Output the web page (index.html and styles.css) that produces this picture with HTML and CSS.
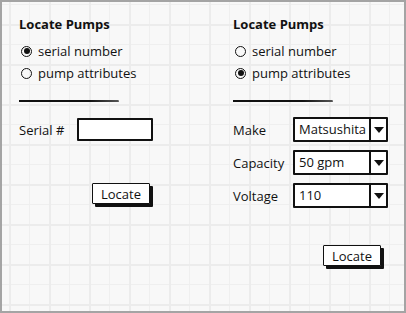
FILE: index.html
```html
<!DOCTYPE html>
<html lang="en">
<head>
    <meta charset="UTF-8">
    <title>Locate Pumps</title>
    <link rel="stylesheet" href="styles.css">
</head>
<body>
    <div class="frame">
        <div class="panel">
            <h1>Locate Pumps</h1>
            <ul class="radios">
                <li><span class="radio checked"></span>serial number</li>
                <li><span class="radio"></span>pump attributes</li>
            </ul>
            <div class="rule"></div>
            <div class="field">
                <label>Serial #</label>
                <div class="textbox"></div>
            </div>
            <div class="actions left">
                <button class="locate">Locate</button>
            </div>
        </div>
        <div class="panel">
            <h1>Locate Pumps</h1>
            <ul class="radios">
                <li><span class="radio"></span>serial number</li>
                <li><span class="radio checked"></span>pump attributes</li>
            </ul>
            <div class="rule"></div>
            <div class="selects">
                <div class="field">
                    <label>Make</label>
                    <div class="combo"><span>Matsushita</span><i></i></div>
                </div>
                <div class="field">
                    <label>Capacity</label>
                    <div class="combo"><span>50 gpm</span><i></i></div>
                </div>
                <div class="field">
                    <label>Voltage</label>
                    <div class="combo"><span>110</span><i></i></div>
                </div>
            </div>
            <div class="actions right">
                <button class="locate">Locate</button>
            </div>
        </div>
    </div>
</body>
</html>
```

FILE: styles.css
```css
body {
    margin: 0;
    font-family: "Open Sans", "Liberation Sans", sans-serif;
    color: #111;
}
.frame {
    width: 406px;
    height: 313px;
    box-sizing: border-box;
    border: 2px solid #a4a4a4;
    background-color: #f8f8f8;
    background-image:
        linear-gradient(to right, #ececec 2px, transparent 2px),
        linear-gradient(to bottom, #ececec 2px, transparent 2px),
        linear-gradient(to right, #efefef 1px, transparent 1px),
        linear-gradient(to bottom, #efefef 1px, transparent 1px);
    background-size: 40px 40px, 40px 40px, 20px 20px, 20px 20px;
    background-position: 7px -18px, 7px 22px, 7px 2px, 7px 2px;
    display: grid;
    grid-template-columns: 214px 1fr;
}
.panel {
    padding: 14px 0 0 17px;
    display: flex;
    flex-direction: column;
}
.panel h1 {
    margin: 0;
    font-size: 13px;
    line-height: 17px;
    font-weight: bold;
}
.radios {
    list-style: none;
    margin: 7px 0 0;
    padding: 0;
}
.radios li {
    display: flex;
    align-items: center;
    height: 22px;
    font-size: 13px;
}
.radio {
    width: 9px;
    height: 9px;
    border: 1.5px solid #111;
    border-radius: 50%;
    margin: 0 6px 0 2px;
    display: flex;
    align-items: center;
    justify-content: center;
}
.radio.checked::after {
    content: '';
    width: 6px;
    height: 6px;
    border-radius: 50%;
    background: #111;
}
.rule {
    width: 100px;
    height: 2px;
    margin-top: 16px;
    background: linear-gradient(to right, #111 70%, #555);
    border-radius: 0 2px 1px 0;
}
.field {
    display: flex;
    align-items: center;
    font-size: 13px;
}
.panel > .field {
    margin-top: 16px;
}
.field label {
    width: 58px;
}
.textbox {
    width: 72px;
    height: 19px;
    background: #fff;
    border: 2.5px solid #111;
    border-radius: 1px;
}
.actions {
    display: flex;
}
.actions.left {
    margin: 42px 0 0 73px;
}
.actions.right {
    margin: 37px 0 0 90px;
}
.locate {
    font-family: inherit;
    font-size: 13px;
    color: #111;
    background: #fff;
    border: 1.5px solid #111;
    border-radius: 1px;
    padding: 0 8px;
    height: 21px;
    box-shadow: 3px 3px 0 #111;
}
.selects {
    margin-top: 15px;
    display: flex;
    flex-direction: column;
    gap: 8px;
}
.selects label {
    width: 60px;
}
.combo {
    width: 91px;
    height: 21px;
    background: #fff;
    border: 2px solid #111;
    border-radius: 1px;
    display: flex;
}
.combo span {
    flex: 1;
    padding-left: 4px;
    line-height: 21px;
    border-right: 2px solid #111;
}
.combo i {
    width: 15px;
    display: flex;
    align-items: center;
    justify-content: center;
}
.combo i::after {
    content: '';
    border-left: 5px solid transparent;
    border-right: 5px solid transparent;
    border-top: 6px solid #111;
}
```
